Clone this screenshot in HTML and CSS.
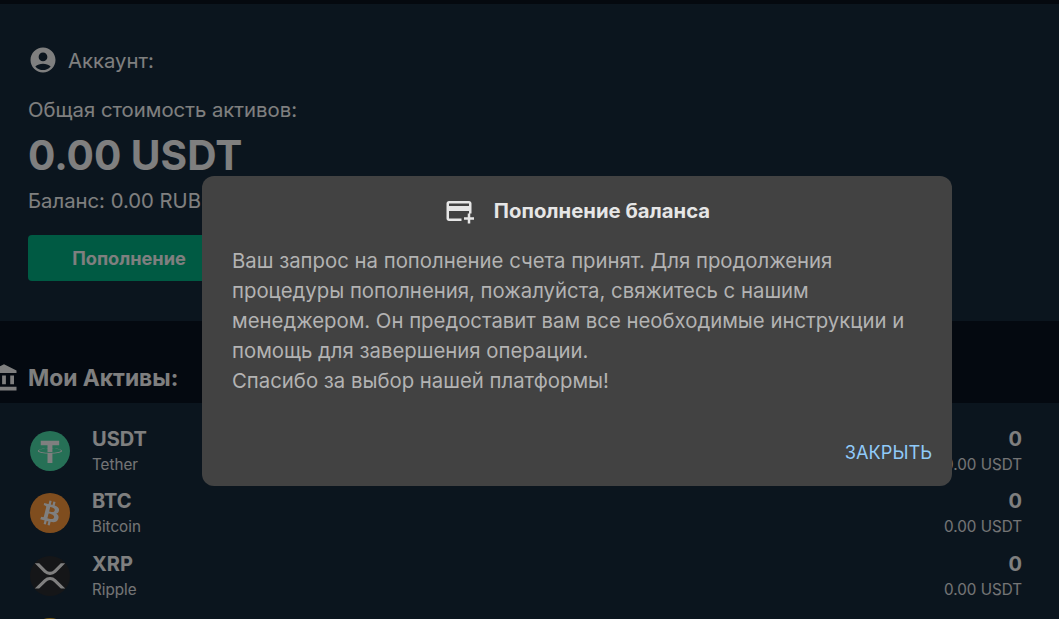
FILE: index.html
```html
<!DOCTYPE html>
<html>
<head>
  <title>Аккаунт</title>
  <link rel="stylesheet" href="styles.css">
</head>
<body>
  <div class="top-strip"></div>

  <section class="account">
    <div class="account-row">
      <svg class="icon-account" viewBox="0 0 24 24"><path d="M12 2C6.48 2 2 6.48 2 12s4.48 10 10 10 10-4.48 10-10S17.52 2 12 2zm0 4c1.93 0 3.5 1.57 3.5 3.5S13.93 13 12 13s-3.5-1.57-3.5-3.5S10.07 6 12 6zm0 14c-2.03 0-4.43-.82-6.14-2.88C7.55 15.8 9.68 15 12 15s4.45.8 6.14 2.12C16.43 19.18 14.03 20 12 20z"/></svg>
      <span>Аккаунт:</span>
    </div>
    <p class="total-label">Общая стоимость активов:</p>
    <p class="total-value">0.00 USDT</p>
    <p class="balance">Баланс: 0.00 RUB</p>
    <button class="btn-deposit">Пополнение</button>
  </section>

  <section class="assets-head">
    <svg class="icon-bank" viewBox="0 0 24 24"><path d="M4 10h3v7H4zm6.5 0h3v7h-3zM2 19h20v3H2zm15-9h3v7h-3zm-5-9L2 6v2h20V6z"/></svg>
    <h2>Мои Активы:</h2>
  </section>

  <section class="assets">
    <div class="asset">
      <svg class="coin" viewBox="0 0 32 32"><circle class="coin-usdt" cx="16" cy="16" r="16"/><path class="coin-mark" d="M17.922 17.383v-.002c-.11.008-.677.042-1.942.042-1.01 0-1.721-.03-1.971-.042v.003c-3.888-.171-6.79-.848-6.79-1.658 0-.809 2.902-1.486 6.79-1.66v2.644c.254.018.982.061 1.988.061 1.207 0 1.812-.05 1.925-.06v-2.643c3.88.173 6.775.85 6.775 1.658 0 .81-2.895 1.485-6.775 1.657m0-3.59v-2.366h5.414V7.819H8.595v3.608h5.414v2.365c-4.4.202-7.709 1.074-7.709 2.118 0 1.044 3.309 1.915 7.709 2.118v7.582h3.913v-7.584c4.393-.202 7.694-1.073 7.694-2.116 0-1.043-3.301-1.914-7.694-2.117"/></svg>
      <div class="asset-name"><strong>USDT</strong><span>Tether</span></div>
      <div class="asset-amount"><strong>0</strong><span>0.00 USDT</span></div>
    </div>
    <div class="asset">
      <svg class="coin" viewBox="0 0 32 32"><circle class="coin-btc" cx="16" cy="16" r="16"/><path class="coin-mark" d="M23.189 14.02c.314-2.096-1.283-3.223-3.465-3.975l.708-2.84-1.728-.43-.69 2.765c-.454-.114-.92-.22-1.385-.326l.695-2.783L15.596 6l-.708 2.839c-.376-.086-.746-.17-1.104-.26l.002-.009-2.384-.595-.46 1.846s1.283.294 1.256.312c.7.175.826.638.805 1.006l-.806 3.235c.048.012.11.03.18.057l-.183-.045-1.13 4.532c-.086.212-.303.531-.793.41.018.025-1.256-.313-1.256-.313l-.858 1.978 2.25.561c.418.105.828.215 1.231.318l-.715 2.872 1.727.43.708-2.84c.472.127.93.245 1.378.357l-.706 2.828 1.728.43.715-2.866c2.948.558 5.164.333 6.097-2.333.752-2.146-.037-3.385-1.588-4.192 1.13-.26 1.98-1.003 2.207-2.538zm-3.95 5.538c-.533 2.147-4.148.986-5.32.695l.95-3.805c1.172.293 4.929.872 4.37 3.11zm.535-5.569c-.487 1.953-3.495.96-4.47.717l.86-3.45c.975.243 4.118.696 3.61 2.733z"/></svg>
      <div class="asset-name"><strong>BTC</strong><span>Bitcoin</span></div>
      <div class="asset-amount"><strong>0</strong><span>0.00 USDT</span></div>
    </div>
    <div class="asset">
      <svg class="coin" viewBox="0 0 32 32"><circle class="coin-xrp" cx="16" cy="16" r="16"/><path class="coin-mark" transform="translate(16 16) scale(1.22) translate(-16 -16.3)" d="M23.07 8h2.89l-6.015 5.957a5.621 5.621 0 01-7.89 0L6.035 8H8.93l4.57 4.523a3.556 3.556 0 004.996 0L23.07 8zM8.895 24.563H6l6.055-5.993a5.621 5.621 0 017.89 0L26 24.562h-2.895L18.5 20a3.556 3.556 0 00-4.996 0l-4.61 4.563z"/></svg>
      <div class="asset-name"><strong>XRP</strong><span>Ripple</span></div>
      <div class="asset-amount"><strong>0</strong><span>0.00 USDT</span></div>
    </div>
    <div class="asset">
      <svg class="coin" viewBox="0 0 32 32"><circle class="coin-bnb" cx="16" cy="16" r="16"/></svg>
    </div>
  </section>

  <!-- Диалог поверх страницы -->
  <div class="overlay">
    <div class="dialog">
      <div class="dialog-title">
        <svg class="icon-card" viewBox="0 0 24 24"><path d="M20 4H4c-1.11 0-1.99.89-1.99 2L2 18c0 1.11.89 2 2 2h10v-2H4v-6h16v2h2V6c0-1.11-.89-2-2-2zm0 4H4V6h16v2zm4 9v2h-3v3h-2v-3h-3v-2h3v-3h2v3h3z"/></svg>
        <h3>Пополнение баланса</h3>
      </div>
      <p class="dialog-text">Ваш запрос на пополнение счета принят. Для продолжения процедуры пополнения, пожалуйста, свяжитесь с нашим менеджером. Он предоставит вам все необходимые инструкции и помощь для завершения операции.<br>Спасибо за выбор нашей платформы!</p>
      <div class="dialog-actions">
        <button class="btn-close">Закрыть</button>
      </div>
    </div>
  </div>
</body>
</html>
```

FILE: styles.css
```css
html, body {
  height: 100%;
}
body {
  margin: 0;
  overflow: hidden;
  background: #162a3c;
  color: #fff;
  font-family: 'Inter', 'Liberation Sans', sans-serif;
}
p, h2, h3 {
  margin: 0;
}
.top-strip {
  height: 4px;
  background: #0a121e;
}
.account {
  height: 317px;
  box-sizing: border-box;
  padding: 41px 28px 0;
}
.account-row {
  display: flex;
  align-items: center;
  gap: 10px;
  height: 30px;
  font-size: 20.3px;
}
.icon-account {
  width: 30px;
  height: 30px;
  fill: #fff;
}
.total-label {
  margin-top: 20px;
  font-size: 20.3px;
  line-height: 30px;
}
.total-value {
  margin-top: 7px;
  font-size: 40.6px;
  font-weight: 700;
  line-height: 48px;
}
.balance {
  margin-top: 6px;
  font-size: 20.3px;
  line-height: 30px;
}
.btn-deposit {
  display: block;
  width: 202px;
  height: 46px;
  margin-top: 19px;
  border: none;
  border-radius: 4px;
  background: #00b486;
  color: #fff;
  font-family: inherit;
  font-size: 18.2px;
  font-weight: 700;
}
.assets-head {
  display: flex;
  align-items: center;
  gap: 9.5px;
  height: 82px;
  box-sizing: border-box;
  padding-top: 31px;
  margin-left: -11.5px;
  background: #081220;
}
.icon-bank {
  width: 30px;
  height: 30px;
  fill: #fff;
}
.assets-head h2 {
  font-size: 22.8px;
  font-weight: 700;
}
.assets {
  display: flex;
  flex-direction: column;
  gap: 22.5px;
  padding: 27.7px 37px 0 30px;
}
.asset {
  display: flex;
  align-items: center;
  gap: 22px;
  height: 40px;
}
.coin {
  width: 40px;
  height: 40px;
  flex: none;
}
.coin-usdt {
  fill: #4ce0ac;
}
.coin-btc {
  fill: #ff9a3c;
}
.coin-xrp {
  fill: #2a2c30;
}
.coin-bnb {
  fill: #f3ba2f;
}
.coin-mark {
  fill: #fff;
}
.asset-name, .asset-amount {
  display: flex;
  flex-direction: column;
  margin-top: 2px;
}
.asset-amount {
  margin-left: auto;
  align-items: flex-end;
}
.asset-name strong, .asset-amount strong {
  font-size: 20px;
  line-height: 26px;
  font-weight: 700;
}
.asset-name span, .asset-amount span {
  font-size: 15.2px;
  line-height: 26px;
  opacity: .9;
}
.overlay {
  position: fixed;
  top: 0;
  right: 0;
  bottom: 0;
  left: 0;
  display: flex;
  align-items: flex-start;
  background: rgba(0,0,0,0.5);
  padding: 176px 0 0 202px;
  box-sizing: border-box;
}
.dialog {
  width: 750px;
  height: 310px;
  box-sizing: border-box;
  padding: 20px 20px 20px 30px;
  border-radius: 12px;
  background: #424242;
  display: flex;
  flex-direction: column;
}
.dialog-title {
  display: flex;
  align-items: center;
  justify-content: center;
  gap: 20px;
  margin-right: 10px;
  height: 30px;
}
.icon-card {
  width: 30px;
  height: 30px;
  fill: #e6e6e6;
}
.dialog-title h3 {
  margin-top: -1px;
  font-size: 20.3px;
  font-weight: 700;
  color: #e6e6e6;
}
.dialog-text {
  margin-top: 20px;
  margin-right: 10px;
  font-size: 20.33px;
  line-height: 30px;
  color: #b3b3b3;
}
.dialog-actions {
  margin-top: auto;
  display: flex;
  justify-content: flex-end;
  padding-bottom: 2px;
}
.btn-close {
  padding: 0;
  border: none;
  background: none;
  color: #90caf9;
  font-family: inherit;
  font-size: 18.2px;
  line-height: 24px;
  text-transform: uppercase;
}
```
